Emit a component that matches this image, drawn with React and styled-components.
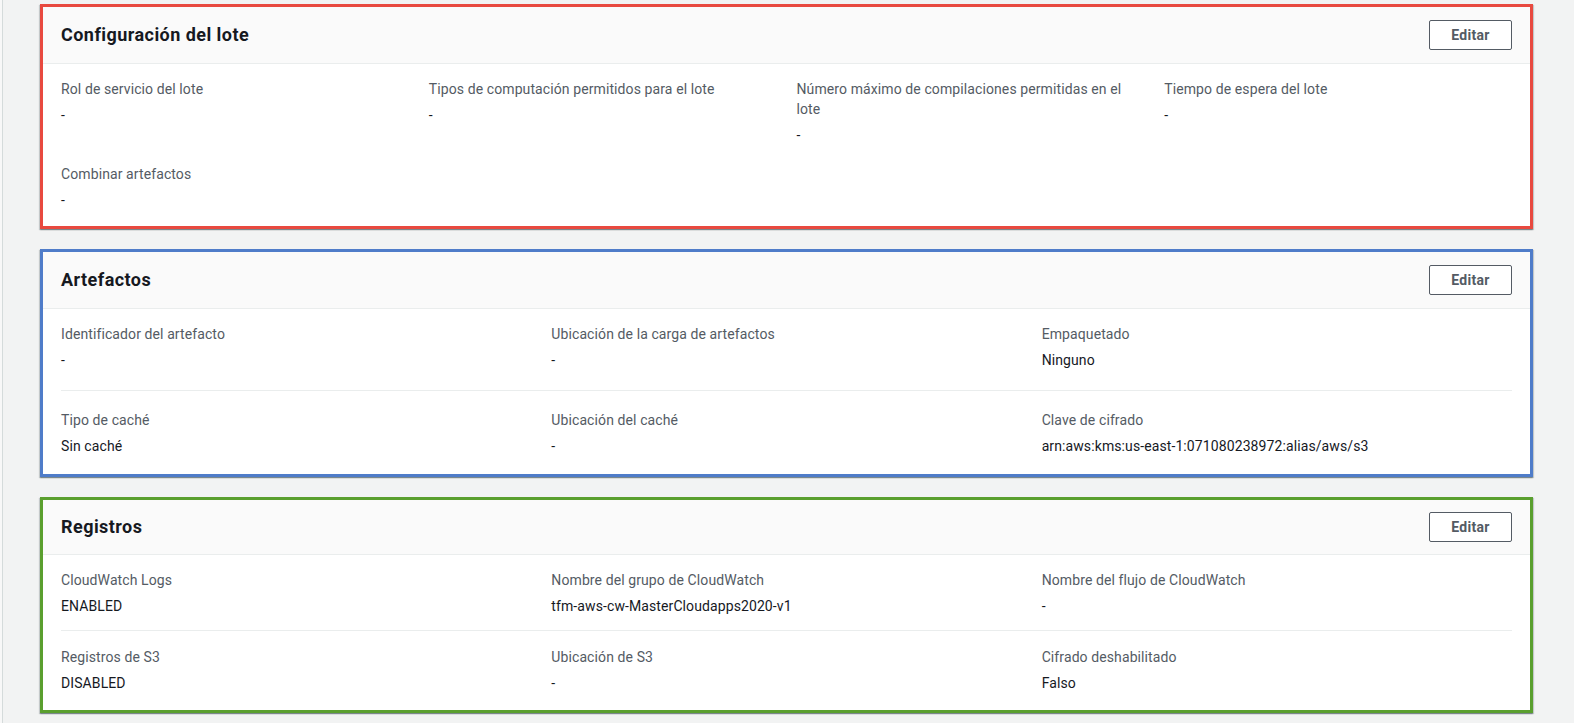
import React from 'react'
import styled, { createGlobalStyle } from 'styled-components'

const GlobalStyle = createGlobalStyle`
  html, body {
    margin: 0;
    padding: 0;
    background: #f2f3f3;
  }
  body {
    font-family: Roboto, "Noto Sans", "Liberation Sans", sans-serif;
    color: #16191f;
  }
`

// pads: [padding-top, padding-bottom] for each row
const sections = [
  {
    title: 'Configuración del lote',
    tone: '#e8493f',
    columns: 4,
    divided: false,
    headerHeight: 56,
    pads: [[15, 0], [19, 16]],
    rows: [
      [
        { label: 'Rol de servicio del lote', value: '-' },
        { label: 'Tipos de computación permitidos para el lote', value: '-' },
        { label: 'Número máximo de compilaciones permitidas en el lote', value: '-' },
        { label: 'Tiempo de espera del lote', value: '-' },
      ],
      [{ label: 'Combinar artefactos', value: '-' }],
    ],
  },
  {
    title: 'Artefactos',
    tone: '#4f7cc9',
    columns: 3,
    divided: true,
    headerHeight: 56,
    pads: [[15, 20], [19, 18]],
    rows: [
      [
        { label: 'Identificador del artefacto', value: '-' },
        { label: 'Ubicación de la carga de artefactos', value: '-' },
        { label: 'Empaquetado', value: 'Ninguno' },
      ],
      [
        { label: 'Tipo de caché', value: 'Sin caché' },
        { label: 'Ubicación del caché', value: '-' },
        { label: 'Clave de cifrado', value: 'arn:aws:kms:us-east-1:071080238972:alias/aws/s3' },
      ],
    ],
  },
  {
    title: 'Registros',
    tone: '#5a9f2e',
    columns: 3,
    divided: true,
    headerHeight: 54,
    pads: [[15, 14], [16, 17]],
    rows: [
      [
        { label: 'CloudWatch Logs', value: 'ENABLED' },
        { label: 'Nombre del grupo de CloudWatch', value: 'tfm-aws-cw-MasterCloudapps2020-v1' },
        { label: 'Nombre del flujo de CloudWatch', value: '-' },
      ],
      [
        { label: 'Registros de S3', value: 'DISABLED' },
        { label: 'Ubicación de S3', value: '-' },
        { label: 'Cifrado deshabilitado', value: 'Falso' },
      ],
    ],
  },
]

const App = () => {
  return (
    <Layout>
      <GlobalStyle />
      <SideEdge />
      <Main>
        {sections.map((s) => (
          <Card key={s.title} $tone={s.tone}>
            <CardHeader $height={s.headerHeight}>
              <Title>{s.title}</Title>
              <EditButton>Editar</EditButton>
            </CardHeader>
            <CardBody>
              {s.rows.map((row, i) => (
                <Row
                  key={i}
                  $columns={s.columns}
                  $rule={s.divided && i > 0}
                  $top={s.pads[i][0]}
                  $bottom={s.pads[i][1]}
                >
                  {row.map((item) => (
                    <Item key={item.label}>
                      <Label>{item.label}</Label>
                      <Value>{item.value}</Value>
                    </Item>
                  ))}
                </Row>
              ))}
            </CardBody>
          </Card>
        ))}
      </Main>
    </Layout>
  )
}

const Layout = styled.div`
  display: flex;
  min-height: 723px;
  background: #f2f3f3;
`

const SideEdge = styled.div`
  width: 2px;
  flex-shrink: 0;
  background: #f8f8f8;
  border-right: 1px solid #d5dbdb;
`

const Main = styled.main`
  flex: 1;
  display: flex;
  flex-direction: column;
  gap: 20px;
  padding: 4px 41px 0 37px;
`

const Card = styled.section`
  background: #ffffff;
  border: 3px solid ${(p) => p.$tone};
  box-shadow: 0 1px 1px 0 rgba(0, 28, 36, 0.3), 1px 1px 1px 0 rgba(0, 28, 36, 0.15),
    -1px 1px 1px 0 rgba(0, 28, 36, 0.15);
`

const CardHeader = styled.header`
  height: ${(p) => p.$height}px;
  padding: 0 18px;
  display: flex;
  align-items: center;
  justify-content: space-between;
  background: #fafafa;
  border-bottom: 1px solid #eaeded;
`

const Title = styled.h2`
  margin: 0;
  font-size: 18px;
  font-weight: 700;
  line-height: 22px;
  letter-spacing: 0.45px;
  color: #16191f;
`

const EditButton = styled.button`
  width: 83px;
  height: 30px;
  border: 1px solid #545b64;
  border-radius: 2px;
  background: #ffffff;
  color: #545b64;
  font-family: inherit;
  font-size: 14px;
  font-weight: 700;
  letter-spacing: 0.3px;
  cursor: pointer;
`

const CardBody = styled.div`
  padding: 0 18px;
`

const Row = styled.div`
  display: grid;
  grid-template-columns: repeat(${(p) => p.$columns}, 1fr);
  column-gap: 20px;
  padding: ${(p) => p.$top}px 0 ${(p) => p.$bottom}px;
  border-top: ${(p) => (p.$rule ? '1px solid #eaeded' : 'none')};
`

const Item = styled.div`
  display: flex;
  flex-direction: column;
  gap: 6px;
  min-width: 0;
`

const Label = styled.div`
  font-size: 14px;
  line-height: 20px;
  letter-spacing: 0.1px;
  color: #545b64;
`

const Value = styled.div`
  font-size: 14px;
  line-height: 20px;
  letter-spacing: 0.1px;
  color: #16191f;
`

export default App
